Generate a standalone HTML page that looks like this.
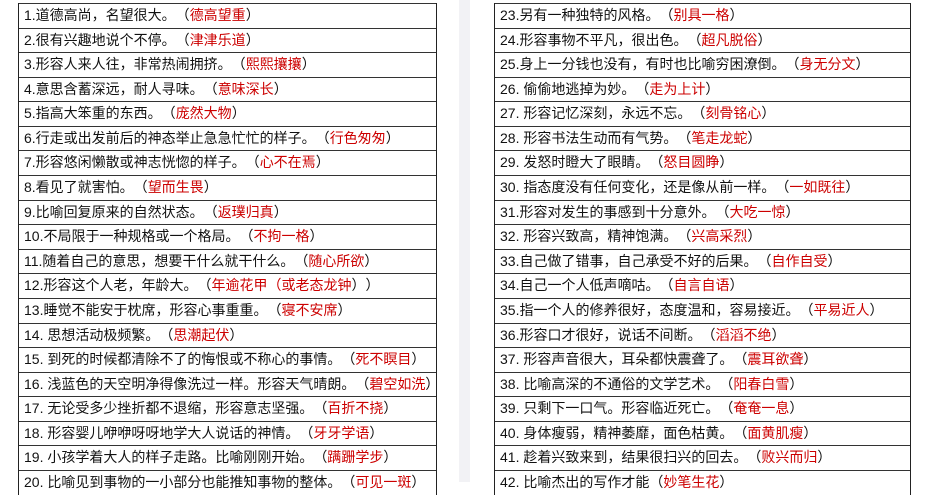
<!DOCTYPE html>
<html><head><meta charset="utf-8"><style>
body{margin:0;width:925px;height:482px;overflow:hidden;background:#fff;font-family:"Liberation Sans","Noto Sans CJK SC",sans-serif;font-size:14px;color:#111;position:relative;text-spacing-trim:space-all;font-feature-settings:"chws" 0,"halt" 0}
.strip{position:absolute;left:459px;top:0;width:11px;height:482px;background:#f2f2f5}
.t{position:absolute;top:3px;border-left:1.5px solid #222;border-right:1.5px solid #222}
.r{height:23.58px;border-top:1px solid #333;line-height:23px;padding-left:5px;white-space:nowrap;overflow:hidden}
.r span{color:#c00}
</style></head><body>
<div class="strip"></div>
<div class="t" style="left:18px;width:417px">
<div class="r">1.道德高尚，名望很大。（<span>德高望重</span>）</div>
<div class="r">2.很有兴趣地说个不停。（<span>津津乐道</span>）</div>
<div class="r">3.形容人来人往，非常热闹拥挤。（<span>熙熙攘攘</span>）</div>
<div class="r">4.意思含蓄深远，耐人寻味。（<span>意味深长</span>）</div>
<div class="r">5.指高大笨重的东西。（<span>庞然大物</span>）</div>
<div class="r">6.行走或出发前后的神态举止急急忙忙的样子。（<span>行色匆匆</span>）</div>
<div class="r">7.形容悠闲懒散或神志恍惚的样子。（<span>心不在焉</span>）</div>
<div class="r">8.看见了就害怕。（<span>望而生畏</span>）</div>
<div class="r">9.比喻回复原来的自然状态。（<span>返璞归真</span>）</div>
<div class="r">10.不局限于一种规格或一个格局。（<span>不拘一格</span>）</div>
<div class="r">11.随着自己的意思，想要干什么就干什么。（<span>随心所欲</span>）</div>
<div class="r">12.形容这个人老，年龄大。（<span>年逾花甲（或老态龙钟</span>））</div>
<div class="r">13.睡觉不能安于枕席，形容心事重重。（<span>寝不安席</span>）</div>
<div class="r">14. 思想活动极频繁。（<span>思潮起伏</span>）</div>
<div class="r">15. 到死的时候都清除不了的悔恨或不称心的事情。（<span>死不瞑目</span>）</div>
<div class="r">16. 浅蓝色的天空明净得像洗过一样。形容天气晴朗。（<span>碧空如洗</span>）</div>
<div class="r">17. 无论受多少挫折都不退缩，形容意志坚强。（<span>百折不挠</span>）</div>
<div class="r">18. 形容婴儿咿咿呀呀地学大人说话的神情。（<span>牙牙学语</span>）</div>
<div class="r">19. 小孩学着大人的样子走路。比喻刚刚开始。（<span>蹒跚学步</span>）</div>
<div class="r">20. 比喻见到事物的一小部分也能推知事物的整体。（<span>可见一斑</span>）</div>
</div>
<div class="t" style="left:494px;width:415px">
<div class="r">23.另有一种独特的风格。（<span>别具一格</span>）</div>
<div class="r">24.形容事物不平凡，很出色。（<span>超凡脱俗</span>）</div>
<div class="r">25.身上一分钱也没有，有时也比喻穷困潦倒。（<span>身无分文</span>）</div>
<div class="r">26. 偷偷地逃掉为妙。（<span>走为上计</span>）</div>
<div class="r">27. 形容记忆深刻，永远不忘。（<span>刻骨铭心</span>）</div>
<div class="r">28. 形容书法生动而有气势。（<span>笔走龙蛇</span>）</div>
<div class="r">29. 发怒时瞪大了眼睛。（<span>怒目圆睁</span>）</div>
<div class="r">30. 指态度没有任何变化，还是像从前一样。（<span>一如既往</span>）</div>
<div class="r">31.形容对发生的事感到十分意外。（<span>大吃一惊</span>）</div>
<div class="r">32. 形容兴致高，精神饱满。（<span>兴高采烈</span>）</div>
<div class="r">33.自己做了错事，自己承受不好的后果。（<span>自作自受</span>）</div>
<div class="r">34.自己一个人低声嘀咕。（<span>自言自语</span>）</div>
<div class="r">35.指一个人的修养很好，态度温和，容易接近。（<span>平易近人</span>）</div>
<div class="r">36.形容口才很好，说话不间断。（<span>滔滔不绝</span>）</div>
<div class="r">37. 形容声音很大，耳朵都快震聋了。（<span>震耳欲聋</span>）</div>
<div class="r">38. 比喻高深的不通俗的文学艺术。（<span>阳春白雪</span>）</div>
<div class="r">39. 只剩下一口气。形容临近死亡。（<span>奄奄一息</span>）</div>
<div class="r">40. 身体瘦弱，精神萎靡，面色枯黄。（<span>面黄肌瘦</span>）</div>
<div class="r">41. 趁着兴致来到，结果很扫兴的回去。（<span>败兴而归</span>）</div>
<div class="r">42. 比喻杰出的写作才能（<span>妙笔生花</span>）</div>
</div>
</body></html>
